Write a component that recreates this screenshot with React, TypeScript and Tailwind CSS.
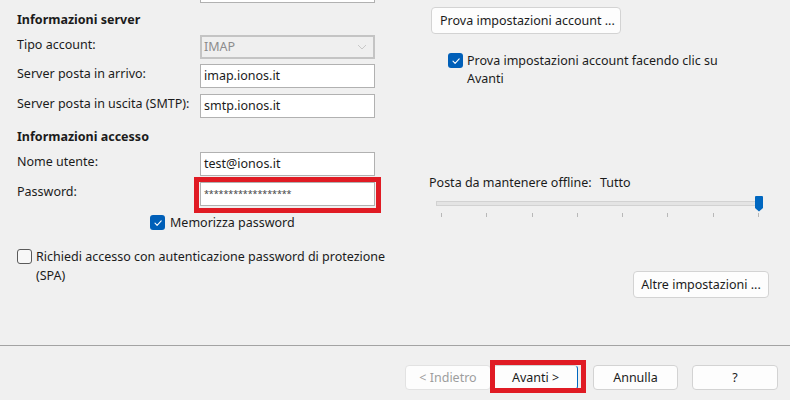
import React from "react";

const font = { fontFamily: '"Noto Sans", "Open Sans", sans-serif' };

function Check({ checked }: { checked: boolean }) {
  if (checked) {
    return (
      <div className="w-[15px] h-[15px] rounded-[3px] bg-[#005fb8] flex items-center justify-center shrink-0">
        <svg width="10" height="10" viewBox="0 0 10 10" fill="none">
          <path d="M2 5.2 L4.1 7.3 L8.2 2.8" stroke="white" strokeWidth="1.1" strokeLinecap="round" strokeLinejoin="round" />
        </svg>
      </div>
    );
  }
  return <div className="w-[15px] h-[15px] rounded-[3px] border border-[#5a5a5a] bg-[#f7f7f7] shrink-0" />;
}

function Row({ label, children }: { label: string; children: React.ReactNode }) {
  return (
    <div className="flex items-start h-[24px]">
      <div className="w-[183px] pt-[2px] leading-[16px]">{label}</div>
      {children}
    </div>
  );
}

function TextBox({ value, className = "" }: { value: string; className?: string }) {
  return (
    <div className={"w-[175px] h-[24px] border border-[#b1b1b1] bg-white pl-[3px] flex items-center leading-[16px] " + className}>
      {value}
    </div>
  );
}

function Btn({ children, className = "" }: { children: React.ReactNode; className?: string }) {
  return (
    <div className={"h-[25px] bg-[#fdfdfd] border border-[#d3d3d3] rounded-[4px] flex items-center justify-center leading-[16px] " + className}>
      {children}
    </div>
  );
}

export default function App() {
  const ticks = [441, 486, 532, 577, 622, 667, 713, 758];
  return (
    <div style={font} className="w-[790px] h-[400px] bg-[#f0f0f0] text-[12.5px] text-[#1b1b1b] flex flex-col overflow-hidden">
      <div className="h-[346px] border-b border-[#a3a3a3] flex shrink-0">
        {/* Left column */}
        <div className="w-[429px] pl-[17px] flex flex-col">
          <div className="ml-[183px] w-[175px] h-[3px] border-x border-b border-[#b1b1b1] bg-white" />
          <div className="mt-[9px] h-[16px] leading-[16px] font-bold">Informazioni server</div>
          <div className="mt-[7px]">
            <Row label="Tipo account:">
              <div className="w-[175px] h-[24px] border-2 border-[#c4c4c4] bg-[#efefef] pl-[2px] flex items-center justify-between text-[#8c8c8c]">
                <span>IMAP</span>
                <svg width="20" height="20" viewBox="0 0 20 20" className="mr-[1px]">
                  <path d="M6 8 L10 12 L14 8" stroke="#c8c8c8" strokeWidth="1" fill="none" />
                </svg>
              </div>
            </Row>
          </div>
          <div className="mt-[5px]">
            <Row label="Server posta in arrivo:">
              <TextBox value="imap.ionos.it" />
            </Row>
          </div>
          <div className="mt-[6px]">
            <Row label="Server posta in uscita (SMTP):">
              <TextBox value="smtp.ionos.it" />
            </Row>
          </div>
          <div className="mt-[11px] h-[16px] leading-[16px] font-bold">Informazioni accesso</div>
          <div className="mt-[7px]">
            <Row label="Nome utente:">
              <TextBox value="test@ionos.it" />
            </Row>
          </div>
          <div className="mt-[6px]">
            <Row label="Password:">
              <div className="relative">
                <TextBox value="******************" className="text-[9px] tracking-[-0.1px] text-[#444]" />
                <div className="absolute left-[-6px] top-[-5px] w-[187px] h-[36px] border-[5px] border-[#e01b24]" />
              </div>
            </Row>
          </div>
          <div className="mt-[9px] ml-[133px] flex items-center gap-[5px] h-[15px]">
            <Check checked />
            <span className="leading-[16px]">Memorizza password</span>
          </div>
          <div className="mt-[19px] flex items-start gap-[4px]">
            <div className="pt-[0px]">
              <Check checked={false} />
            </div>
            <div className="leading-[19px] -mt-[2px] w-[365px]">
              Richiedi accesso con autenticazione password di protezione (SPA)
            </div>
          </div>
        </div>

        {/* Right column */}
        <div className="flex-1 flex flex-col">
          <Btn className="mt-[7px] ml-[2px] w-[190px] h-[27px] justify-start pl-[8px]">Prova impostazioni account ...</Btn>
          <div className="mt-[19px] ml-[19px] flex items-start gap-[4px] h-[35px]">
            <div className="pt-[0px]">
              <Check checked />
            </div>
            <div className="leading-[18px] -mt-[1px] w-[262px]">
              Prova impostazioni account facendo clic su Avanti
            </div>
          </div>
          <div className="mt-[87px] leading-[16px] flex">
            <span className="w-[171px]">Posta da mantenere offline:</span>
            <span>Tutto</span>
          </div>
          <div className="relative mt-[2px] h-[24px]">
            <div className="absolute left-[7px] top-[8px] w-[324px] h-[5px] bg-[#e4e4e4] border border-[#d2d2d2]" />
            <svg className="absolute left-[326px] top-[3px]" width="8" height="16" viewBox="0 0 8 16">
              <path d="M1 0 H7 Q8 0 8 1 V12 L4 15.5 L0 12 V1 Q0 0 1 0 Z" fill="#0067c0" />
            </svg>
            {ticks.map((t) => (
              <div key={t} className="absolute top-[20px] w-px h-[4px] bg-[#b8b8b8]" style={{ left: t - 429 }} />
            ))}
          </div>
          <div className="flex justify-end pr-[21px] mt-[54px]">
            <Btn className="w-[136px] h-[27px]">Altre impostazioni ...</Btn>
          </div>
        </div>
      </div>

      {/* Footer */}
      <div className="flex pl-[405px] pt-[19px]">
        <Btn className="w-[86px] bg-[#f6f6f6] border-[#e2e2e2] text-[#9d9d9d]">&lt; Indietro</Btn>
        <div className="relative ml-[2px]">
          <Btn className="w-[85px] border-[#d3d3d3] border-r-[#0067c0]">Avanti &gt;</Btn>
          <div className="absolute left-[-3px] top-[-5px] w-[96px] h-[33px] border-[5px] border-[#e01b24]" />
        </div>
        <Btn className="ml-[15px] w-[85px]">Annulla</Btn>
        <Btn className="ml-[14px] w-[86px]">?</Btn>
      </div>
    </div>
  );
}
